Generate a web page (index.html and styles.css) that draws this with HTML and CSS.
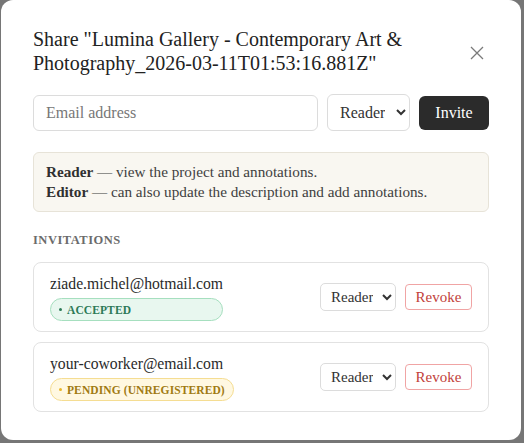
FILE: index.html
```html
<!DOCTYPE html>
<html lang="en">
<head>
<meta charset="utf-8">
<title>Share</title>
<link rel="stylesheet" href="styles.css">
</head>
<body>
<div class="modal">
  <div class="modal-header">
    <h2 class="modal-title">Share "Lumina Gallery - Contemporary Art &amp; Photography_2026-03-11T01:53:16.881Z"</h2>
    <button class="close-btn" aria-label="Close">
      <svg width="14" height="14" viewBox="0 0 14 14"><path d="M1 1L13 13M13 1L1 13" stroke="#7a7a7a" stroke-width="1.3" fill="none"/></svg>
    </button>
  </div>

  <div class="invite-row">
    <input class="email-input" type="text" placeholder="Email address">
    <select class="role-select">
      <option>Reader</option>
      <option>Editor</option>
    </select>
    <button class="invite-btn">Invite</button>
  </div>

  <div class="info-box">
    <div><b>Reader</b> — view the project and annotations.</div>
    <div><b>Editor</b> — can also update the description and add annotations.</div>
  </div>

  <div class="section-label">Invitations</div>

  <div class="invites">
    <div class="invite-card">
      <div class="invite-info">
        <div class="invite-email">ziade.michel@hotmail.com</div>
        <span class="badge badge-accepted"><span class="dot"></span>Accepted</span>
      </div>
      <div class="invite-actions">
        <select class="small-select"><option>Reader</option><option>Editor</option></select>
        <button class="revoke-btn">Revoke</button>
      </div>
    </div>
    <div class="invite-card">
      <div class="invite-info">
        <div class="invite-email">your-coworker@email.com</div>
        <span class="badge badge-pending"><span class="dot"></span>Pending (unregistered)</span>
      </div>
      <div class="invite-actions">
        <select class="small-select"><option>Reader</option><option>Editor</option></select>
        <button class="revoke-btn">Revoke</button>
      </div>
    </div>
  </div>
</div>
</body>
</html>
```

FILE: styles.css
```css
* { box-sizing: border-box; }

html, body {
  margin: 0;
  padding: 0;
}

body {
  background: #767676;
  font-family: "Liberation Serif", "Times New Roman", serif;
  color: #2a2a2a;
  width: 524px;
  height: 443px;
  overflow: hidden;
}

.modal {
  margin-left: 1px;
  width: 520px;
  height: 440px;
  background: #ffffff;
  border-radius: 12px;
  padding: 27px 32px 0 32px;
}

.modal-header {
  display: flex;
  align-items: center;
  justify-content: space-between;
  gap: 16px;
}

.modal-title {
  margin: 0;
  font-size: 20px;
  line-height: 24px;
  font-weight: normal;
  color: #222;
  flex: 1;
}

.close-btn {
  border: none;
  background: transparent;
  padding: 0;
  width: 14px;
  height: 14px;
  margin-right: 5px;
  margin-top: 3px;
  display: flex;
}

.invite-row {
  display: flex;
  align-items: center;
  gap: 9px;
  margin-top: 19px;
}

.email-input {
  flex: 1;
  height: 36px;
  border: 1px solid #dcdcdc;
  border-radius: 6px;
  padding: 0 12px;
  font-family: inherit;
  font-size: 16px;
  color: #333;
  outline: none;
}

.email-input::placeholder {
  color: #777;
}

.role-select {
  width: 83px;
  height: 37px;
  border: 1px solid #dcdcdc;
  border-radius: 6px;
  background: #fff;
  font-family: inherit;
  font-size: 16px;
  color: #333;
  padding: 0 8px;
}

.invite-btn {
  width: 70px;
  height: 34px;
  border: none;
  border-radius: 6px;
  background: #2b2b2b;
  color: #fff;
  font-family: inherit;
  font-size: 16px;
}

.info-box {
  margin-top: 21px;
  background: #f9f7f1;
  border: 1px solid #e7e3d8;
  border-radius: 6px;
  padding: 9px 12px;
  font-size: 15.2px;
  line-height: 20px;
  color: #404040;
}

.info-box b {
  color: #303030;
}

.section-label {
  margin-top: 20px;
  font-size: 12.5px;
  line-height: 16px;
  font-weight: bold;
  letter-spacing: 0.04em;
  text-transform: uppercase;
  color: #6b6b6b;
}

.invites {
  margin-top: 14px;
  display: flex;
  flex-direction: column;
  gap: 10px;
}

.invite-card {
  display: flex;
  align-items: center;
  justify-content: space-between;
  border: 1px solid #e2e2e2;
  border-radius: 8px;
  padding: 10px 16px;
  height: 70px;
}

.invite-info {
  display: flex;
  flex-direction: column;
  gap: 3px;
}

.invite-email {
  font-size: 15.7px;
  line-height: 22px;
  color: #2a2a2a;
}

.badge {
  display: flex;
  align-items: center;
  gap: 5px;
  height: 23px;
  border-radius: 12px;
  padding: 0 8px;
  font-size: 11.5px;
  font-weight: bold;
  letter-spacing: 0.1px;
  text-transform: uppercase;
}

.dot {
  width: 3px;
  height: 3px;
  border-radius: 50%;
  background: currentColor;
}

.badge-accepted {
  background: #e8f7ef;
  border: 1px solid #a6dfbf;
  color: #2d7a57;
}

.badge-pending {
  background: #fff8e1;
  border: 1px solid #f5dd92;
  color: #a07a12;
}

.badge-pending .dot {
  background: #e9b62a;
}

.invite-actions {
  display: flex;
  align-items: center;
  gap: 9px;
}

.small-select {
  width: 76px;
  height: 28px;
  border: 1px solid #dcdcdc;
  border-radius: 5px;
  background: #fff;
  font-family: inherit;
  font-size: 15px;
  color: #333;
  padding: 0 6px;
}

.revoke-btn {
  width: 67px;
  height: 26px;
  border: 1px solid #f0a4a4;
  border-radius: 4px;
  background: #fff;
  color: #c2413a;
  font-family: inherit;
  font-size: 15px;
  padding: 0;
}
```
